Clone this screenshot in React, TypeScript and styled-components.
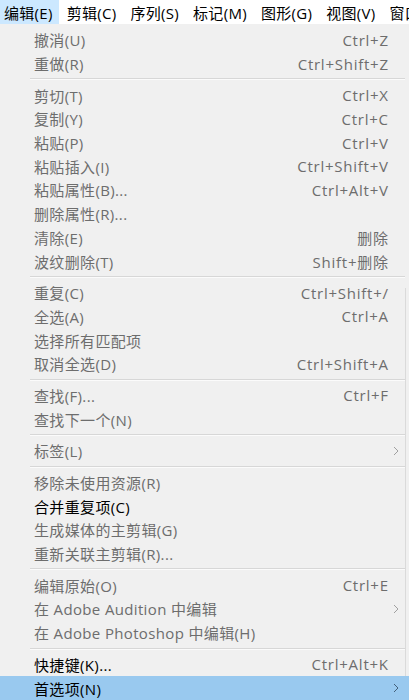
import styled, { createGlobalStyle } from "styled-components";

const GlobalStyle = createGlobalStyle`
    html, body { margin: 0; padding: 0; background: #f0f0f0; }
    body {
        font-family: "Open Sans", "Noto Sans CJK SC", sans-serif;
        width: 409px; height: 700px; overflow: hidden;
    }
`;

// top menu bar
const MenuBar = styled.div`
    display: flex; align-items: stretch;
    height: 24px; background: #ffffff;
    font-size: 15px; color: #000;
    letter-spacing: 0.3px;
    white-space: nowrap; overflow: hidden;
`;
const BarItem = styled.div<{ $open?: boolean }>`
    display: flex; align-items: center;
    padding: 0 6px 0 4px; margin-right: 4px;
    background: ${(p) => (p.$open ? "#cce8ff" : "transparent")};
`;

// dropdown panel
const Dropdown = styled.div`
    position: relative;
    padding-top: 4px;
    background: #f0f0f0;
    height: 676px;
`;
// the edge of the neighbouring panel peeking out on the right
const EdgeLine = styled.div`
    position: absolute; right: 3px; top: 264px; bottom: 0;
    width: 1px; background: #dadada;
`;
const Row = styled.div<{ $hover?: boolean; $enabled?: boolean }>`
    position: relative;
    display: flex; align-items: center; justify-content: space-between;
    height: 23.7px;
    padding: 0 21px 0 34px;
    font-size: 15px;
    letter-spacing: 0.35px;
    color: ${(p) => (p.$enabled ? "#000" : "#6d6d6d")};
    background: ${(p) => (p.$hover ? "#99c9ef" : "transparent")};
    white-space: nowrap;
`;
const Shortcut = styled.span`
    color: #6d6d6d;
    letter-spacing: 0.75px;
    margin-right: -0.75px;
`;
const Arrow = styled.span`
    position: absolute; right: 10px; top: 50%;
    transform: translateY(-50%);
    display: flex;
`;
const Separator = styled.div`
    height: 8px;
    display: flex; align-items: center;
    padding: 0 4px 0 30px;
    &::after {
        content: ""; flex: 1;
        height: 1px; background: #d7d7d7;
        border-bottom: 1px solid #fbfbfb;
    }
`;

type Item = { label: string; key?: string; sub?: boolean; enabled?: boolean; hover?: boolean } | "-";

const items: Item[] = [
    { label: "撤消(U)", key: "Ctrl+Z" },
    { label: "重做(R)", key: "Ctrl+Shift+Z" },
    "-",
    { label: "剪切(T)", key: "Ctrl+X" },
    { label: "复制(Y)", key: "Ctrl+C" },
    { label: "粘贴(P)", key: "Ctrl+V" },
    { label: "粘贴插入(I)", key: "Ctrl+Shift+V" },
    { label: "粘贴属性(B)...", key: "Ctrl+Alt+V" },
    { label: "删除属性(R)..." },
    { label: "清除(E)", key: "删除" },
    { label: "波纹删除(T)", key: "Shift+删除" },
    "-",
    { label: "重复(C)", key: "Ctrl+Shift+/" },
    { label: "全选(A)", key: "Ctrl+A" },
    { label: "选择所有匹配项" },
    { label: "取消全选(D)", key: "Ctrl+Shift+A" },
    "-",
    { label: "查找(F)...", key: "Ctrl+F" },
    { label: "查找下一个(N)" },
    "-",
    { label: "标签(L)", sub: true },
    "-",
    { label: "移除未使用资源(R)" },
    { label: "合并重复项(C)", enabled: true },
    { label: "生成媒体的主剪辑(G)" },
    { label: "重新关联主剪辑(R)..." },
    "-",
    { label: "编辑原始(O)", key: "Ctrl+E" },
    { label: "在 Adobe Audition 中编辑", sub: true },
    { label: "在 Adobe Photoshop 中编辑(H)" },
    "-",
    { label: "快捷键(K)...", key: "Ctrl+Alt+K", enabled: true },
    { label: "首选项(N)", sub: true, enabled: true, hover: true },
];

const Chevron = ({ dark }: { dark?: boolean }) => (
    <svg width="6" height="10" viewBox="0 0 6 10">
        <path d="M1 1 L5 5 L1 9" fill="none" stroke={dark ? "#44607a" : "#a0a0a0"} strokeWidth="1" />
    </svg>
);

export default function App() {
    return (
        <>
            <GlobalStyle />
            <MenuBar>
                <BarItem $open>编辑(E)</BarItem>
                <BarItem>剪辑(C)</BarItem>
                <BarItem>序列(S)</BarItem>
                <BarItem>标记(M)</BarItem>
                <BarItem>图形(G)</BarItem>
                <BarItem>视图(V)</BarItem>
                <BarItem>窗口(W)</BarItem>
            </MenuBar>
            <Dropdown>
                <EdgeLine />
                {items.map((it, i) =>
                    it === "-" ? (
                        <Separator key={i} />
                    ) : (
                        <Row key={i} $enabled={it.enabled} $hover={it.hover}>
                            <span>{it.label}</span>
                            {it.key && <Shortcut>{it.key}</Shortcut>}
                            {it.sub && (
                                <Arrow>
                                    <Chevron dark={it.hover} />
                                </Arrow>
                            )}
                        </Row>
                    )
                )}
            </Dropdown>
        </>
    );
}
